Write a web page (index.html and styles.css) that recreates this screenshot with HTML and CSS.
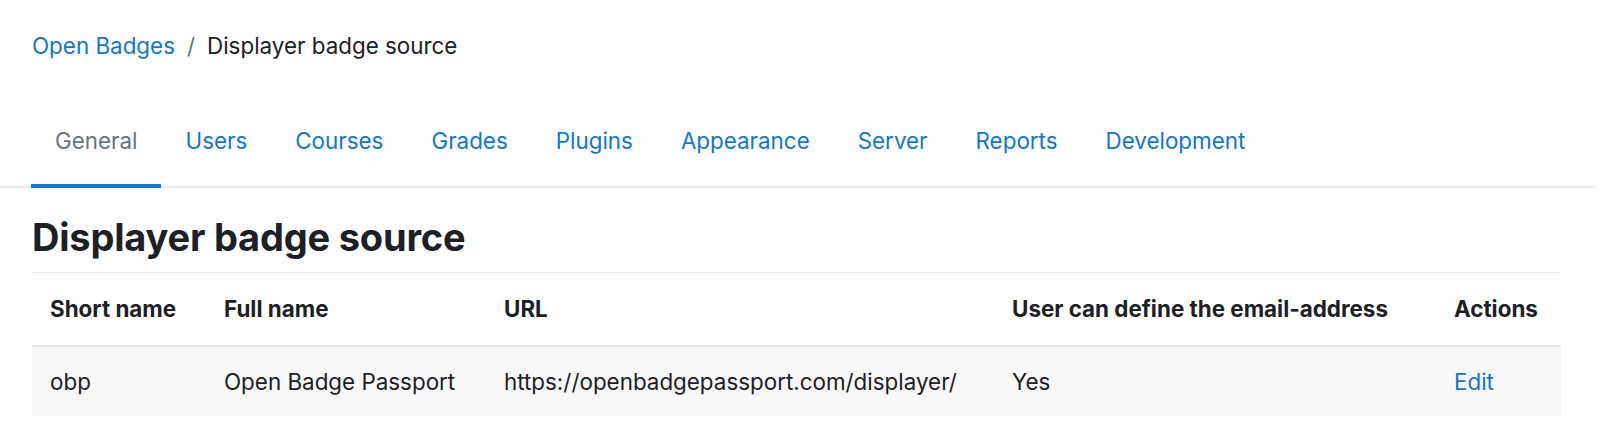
FILE: index.html
```html
<!DOCTYPE html>
<html>
<head>
<meta charset="utf-8">
<link rel="stylesheet" href="styles.css">
</head>
<body>
<nav class="breadcrumb">
  <a href="#" class="crumb-link">Open Badges</a>
  <span class="crumb-sep">/</span>
  <span class="crumb-current">Displayer badge source</span>
</nav>
<div class="tabs">
  <a href="#" class="tab active">General</a>
  <a href="#" class="tab">Users</a>
  <a href="#" class="tab">Courses</a>
  <a href="#" class="tab">Grades</a>
  <a href="#" class="tab">Plugins</a>
  <a href="#" class="tab">Appearance</a>
  <a href="#" class="tab">Server</a>
  <a href="#" class="tab">Reports</a>
  <a href="#" class="tab">Development</a>
</div>
<main class="content">
  <h2 class="title">Displayer badge source</h2>
  <table class="sources">
    <colgroup>
      <col class="c1"><col class="c2"><col class="c3"><col class="c4"><col class="c5">
    </colgroup>
    <thead>
      <tr>
        <th>Short name</th>
        <th>Full name</th>
        <th>URL</th>
        <th>User can define the email-address</th>
        <th>Actions</th>
      </tr>
    </thead>
    <tbody>
      <tr>
        <td>obp</td>
        <td>Open Badge Passport</td>
        <td>https://openbadgepassport.com/displayer/</td>
        <td>Yes</td>
        <td><a href="#" class="action">Edit</a></td>
      </tr>
    </tbody>
  </table>
</main>
</body>
</html>
```

FILE: styles.css
```css
* { box-sizing: border-box; }
body {
  margin: 0;
  font-family: Inter, "Noto Sans", sans-serif;
  font-size: 22.4px;
  color: #1d2125;
  background: #fff;
}
a { text-decoration: none; color: #1177d1; }

.breadcrumb {
  display: flex;
  align-items: center;
  gap: 12px;
  padding: 29px 32px 0;
  height: 62px;
  line-height: 30px;
}
.crumb-sep { color: #6a737b; }
.crumb-current { color: #1d2125; }

.tabs {
  display: flex;
  margin: 38px 5px 0 0;
  padding-left: 31px;
  border-bottom: 2px solid #e6e9ec;
}
.tab {
  padding: 26px 24px 28px;
  line-height: 30px;
  margin-bottom: -2px;
  border-bottom: 4px solid transparent;
}
.tab.active {
  color: #6a737b;
  border-bottom-color: #1177d1;
}

.content {
  padding: 0 39px 0 32px;
}
.title {
  margin: 25px 0 0;
  font-size: 38px;
  font-weight: 700;
  line-height: 48px;
  letter-spacing: -0.2px;
  height: 59px;
}
.sources {
  width: 100%;
  border-collapse: collapse;
  table-layout: fixed;
}
.c1 { width: 174px; }
.c2 { width: 280px; }
.c3 { width: 508px; }
.c4 { width: 442px; }
.c5 { width: auto; }
.sources th, .sources td {
  text-align: left;
  padding: 0 18px;
  white-space: nowrap;
}
.sources thead tr {
  height: 73px;
  border-top: 1px solid #e6e9ec;
  border-bottom: 2px solid #e6e9ec;
}
.sources th { font-weight: 700; }
.sources tbody tr {
  height: 70px;
  background: #f8f8f8;
}
```
